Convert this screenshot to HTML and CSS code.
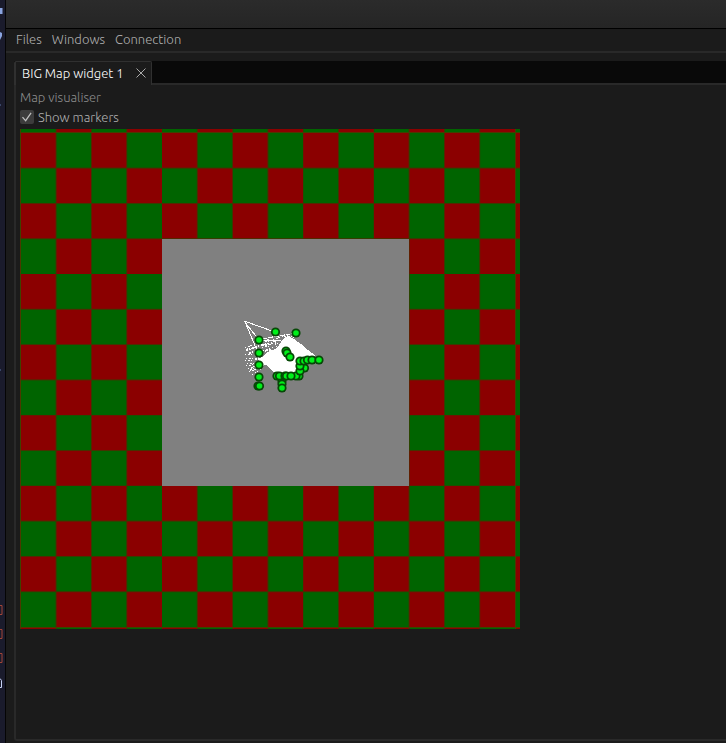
FILE: index.html
```
<!DOCTYPE html>
<html lang="en">
<head>
<meta charset="utf-8">
<title>BIG Map widget 1</title>
<link rel="stylesheet" href="styles.css">
</head>
<body>
<aside class="backdrop" aria-hidden="true">
<svg class="slivers" viewBox="0 0 5 743" preserveAspectRatio="xMinYMin slice">
<path fill="#8aa4e0" d="M0 8h2.500v6H0zM0 32l2 1v3l-2 4z"/>
<path fill="#3a4668" d="M0 104h1v2H0zM0 369h1v2H0z"/>
<path fill="none" stroke="#a14437" d="M0 605.500h2v9H0M0 629.500h2v9H0M0 653.500h2v9H0"/>
<path fill="none" stroke="#c8d3f5" d="M0 678.500l1.500 2v7H0"/>
</svg>
</aside>
<div class="window">
<header class="titlebar"></header>
<nav class="menubar">
<button type="button">Files</button>
<button type="button">Windows</button>
<button type="button">Connection</button>
</nav>
<main class="workspace">
<section class="dock">
<div class="tabs">
<div class="tab">
<button type="button" class="tab-title">BIG Map widget 1</button>
<button type="button" class="close" aria-label="Close tab">
<svg viewBox="0 0 12 12"><path d="M1.500 1.500l9 9M10.500 1.500l-9 9"/></svg>
</button>
</div>
</div>
<div class="panel">
<p class="caption">Map visualiser</p>
<label class="option"><input type="checkbox" checked>Show markers</label>
<svg class="map" viewBox="20 129 500 500" role="img" aria-label="Map with markers">
<defs>
<pattern id="tiles" x="20.800" y="132.800" width="70.600" height="70.600" patternUnits="userSpaceOnUse">
<path fill="#8b0000" d="M0 0h70.600v70.600H0z"/>
<path fill="#006400" d="M35.300 0h35.300v35.300H35.300zM0 35.300h35.300v35.300H0z"/>
</pattern>
<circle id="rim" r="4.600" fill="#064806"/>
<circle id="dot" r="2.800" fill="#00f01a"/>
<g id="m"><use href="#rim"/><use href="#dot"/></g>
</defs>
<path fill="url(#tiles)" d="M20 129h500v500H20z"/>
<path fill="none" stroke="#464000" stroke-opacity=".8" d="M20.500 129v500M515.500 129v500M20 627.500h500M20 132.500h500"/>
<path fill="#808080" d="M162 239h247v247H162z"/>
<g shape-rendering="crispEdges" stroke="#fff" fill="none">
<path fill="#fff" stroke="none" d="M265 354l6-4 5-1 3-4 4-6 5-3 6 3 7 5 7 6 8 6-14 3-4 2-2 13h-19l-7-5-3-4-7 1-2-5z"/>
<path d="M244 321l31 11M244 321l15 19M246 324l12 29M259 340h21M272 337l6-5"/>
<path stroke-dasharray="5 1" d="M262 339l34-6"/>
<path stroke-width="2" stroke-dasharray="2 1 1 2 3 1" d="M246 350l13-4 11-2M249 353l11-2 12-1M255 359l12-2M256 365l11-3M250 370l13-6"/>
<path stroke-dasharray="1 2 2 1 1 3" d="M245 348l14-6M246 351l13-5M245 355l15-2M246 358l15 1M245 361l15-2M247 363l15 1M246 366l16-3M248 369l14-5M249 372l11-4M252 375l9-6M262 342l18-2M261 345l20-5M262 348l17-5M263 351l16-5M264 338l11 4M266 346l10-4M281 335l9 3M284 334l9 5M288 334l7 5M273 340l10-4"/>
</g>
<g>
<use href="#m" x="275.500" y="332"/><use href="#m" x="296" y="333"/>
<use href="#m" x="259" y="340"/><use href="#m" x="259" y="353"/><use href="#m" x="259" y="365"/><use href="#m" x="259" y="377"/><use href="#m" x="258" y="386"/><use href="#m" x="259.500" y="386"/>
<use href="#m" x="286" y="351"/><use href="#m" x="287" y="353"/><use href="#m" x="290" y="357"/>
<use href="#m" x="282" y="381"/><use href="#m" x="282" y="384"/><use href="#m" x="282" y="388"/>
<use href="#m" x="277" y="376"/><use href="#m" x="279.500" y="376"/><use href="#m" x="285" y="376"/><use href="#m" x="286.500" y="376"/><use href="#m" x="299" y="376"/><use href="#m" x="296" y="376"/><use href="#m" x="291" y="376"/>
<use href="#m" x="304.500" y="368"/><use href="#m" x="300" y="371"/><use href="#m" x="300" y="366"/><use href="#m" x="300" y="361"/>
<use href="#m" x="304" y="361"/><use href="#m" x="307.500" y="360"/><use href="#m" x="312" y="360"/><use href="#m" x="319" y="360"/>
</g>
</svg>
</div>
</section>
</main>
</div>
</body>
</html>
```
FILE: styles.css
```
* { box-sizing: border-box; }
body { margin: 0; min-height: 100vh; display: flex; overflow: hidden; background: #1b1b1b; color: #b0b0b0; font: 300 13px/16px Ubuntu, "Noto Sans", sans-serif; }
button { padding: 0; border: 0; background: none; color: inherit; font: inherit; }
.backdrop { width: 6px; flex: none; background: #1a1b2c; border-right: 1px solid #050505; overflow: hidden; }
.slivers { display: block; width: 5px; height: 743px; }
.window { flex: 1; min-width: 0; display: flex; flex-direction: column; }
.titlebar { height: 29px; background: linear-gradient(#2b2b2b, #252525); border-bottom: 1px solid #000; }
.menubar { height: 24px; display: flex; align-items: flex-start; gap: 10px; padding: 2px 10px; border-bottom: 2px solid #292929; }
.workspace { flex: 1; display: flex; padding: 8px 0 2px 8px; }
.dock { flex: 1; min-width: 0; display: flex; flex-direction: column; }
.tabs { height: 24px; background: linear-gradient(#090909 22px, #292929 22px); }
.tab { display: flex; align-items: center; justify-content: space-between; width: 138px; height: 24px; padding: 0 4px 2px 6px; border: solid #303030; border-width: 1px 1px 0 2px; border-radius: 2px 2px 0 0; background: #1b1b1b; color: #fff; }
.close { width: 12px; height: 12px; }
.close svg { display: block; fill: none; stroke: #aaa; }
.panel { flex: 1; border: solid #292929; border-width: 0 0 2px 2px; border-radius: 0 0 0 3px; padding: 4px; }
.caption { margin: 0 0 4px; color: #8c8c8c; }
.option { display: flex; align-items: center; gap: 4px; width: fit-content; }
.option input { appearance: none; display: grid; place-items: center; width: 14px; height: 14px; margin: 0; border-radius: 2px; background: #3c3c3c; }
.option input:checked::before { content: ""; width: 10px; height: 10px; background: #c0c0c0; clip-path: polygon(0 55%, 10% 47%, 35% 78%, 86% 5%, 96% 12%, 37% 98%); }
.map { display: block; width: 500px; max-width: 100%; margin-top: 4px; }
```
